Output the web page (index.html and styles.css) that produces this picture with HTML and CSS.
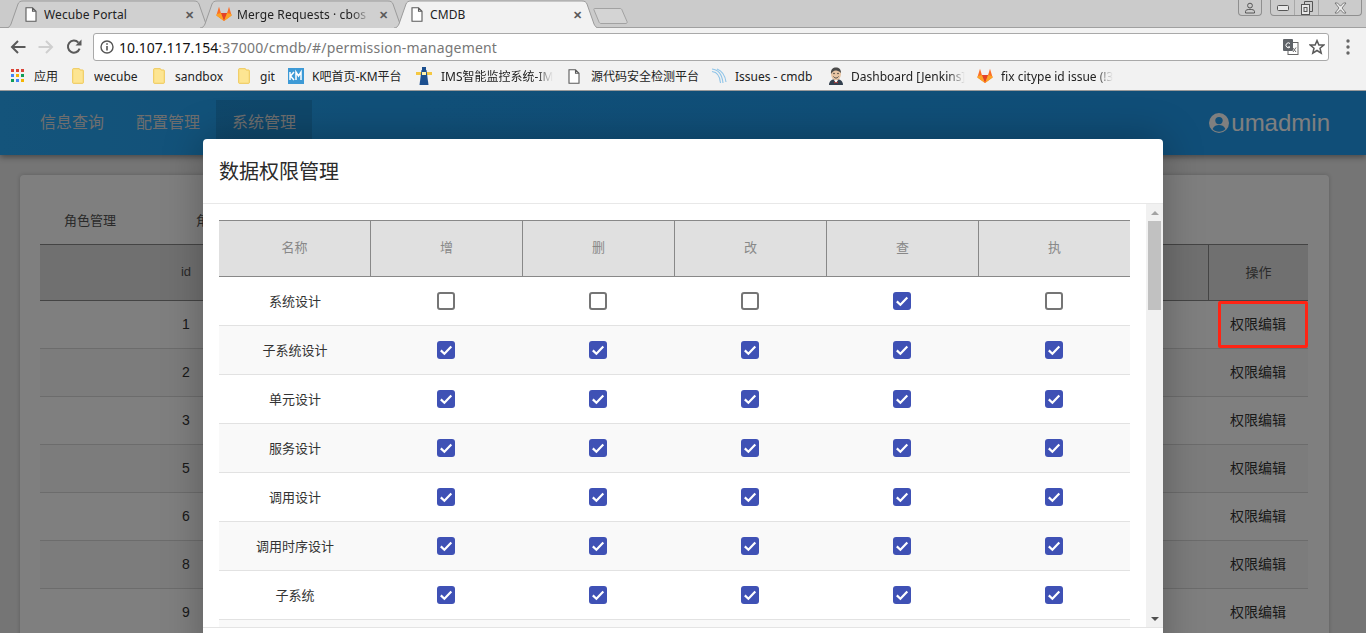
FILE: index.html
```html
<!DOCTYPE html>
<html lang="zh-CN">
<head>
<meta charset="utf-8">
<title>CMDB</title>
<link rel="stylesheet" href="styles.css">
</head>
<body>
<svg class="defs" width="0" height="0" aria-hidden="true">
  <symbol id="check" viewBox="0 0 18 18"><path d="M3.8 9.4 7.4 12.8 14.3 5.6" fill="none" stroke="#fff" stroke-width="2.2"/></symbol>
  <symbol id="doc" viewBox="0 0 12 15"><path d="M1 .8H7.5L11 4.3V14.2H1Z M7.5 .8V4.3H11" fill="#fff" stroke="#5a5a5a" stroke-width="1.1"/></symbol>
  <symbol id="fox" viewBox="0 0 16 16"><path d="M8 15 .4 9.6 .8 8 3 .8 4.9 7H11.1L13 .8 15.2 8 15.6 9.6Z" fill="#fc6d26"/><path d="M8 15 4.9 7H11.1Z" fill="#e24329"/><path d="M8 15 .4 9.6 .8 8 4.9 7ZM8 15 15.6 9.6 15.2 8 11.1 7Z" fill="#fca326"/></symbol>
  <symbol id="folder" viewBox="0 0 12 16"><path d="M.7 1.2C.7.9.9.7 1.2.7H7.4L8.2 2H10.8C11.1 2 11.3 2.2 11.3 2.5V14.8C11.3 15.1 11.1 15.3 10.8 15.3H1.2C.9 15.3.7 15.1.7 14.8Z" fill="#fde592" stroke="#efc752"/></symbol>
  <symbol id="tab-shape" viewBox="0 0 205 28" preserveAspectRatio="none"><path d="M0 28C3 28 4 26 5 24L12 4C13 2 14 1 17 1H188C191 1 192 2 193 4L200 24C201 26 202 28 205 28"/></symbol>
</svg>

<div class="browser">
  <div class="tabstrip">
    <div class="tab">
      <svg class="tab-bg"><use href="#tab-shape"/></svg>
      <svg class="tab-icon doc-icon"><use href="#doc"/></svg>
      <span class="tab-title">Wecube Portal</span>
      <span class="tab-close">✕</span>
    </div>
    <div class="tab tab-second">
      <svg class="tab-bg"><use href="#tab-shape"/></svg>
      <svg class="tab-icon fox-icon"><use href="#fox"/></svg>
      <span class="tab-title fade">Merge Requests · cbos</span>
      <span class="tab-close">✕</span>
    </div>
    <div class="tab tab-active">
      <svg class="tab-bg"><use href="#tab-shape"/></svg>
      <svg class="tab-icon doc-icon"><use href="#doc"/></svg>
      <span class="tab-title">CMDB</span>
      <span class="tab-close">✕</span>
    </div>
    <svg class="newtab" width="36" height="18" viewBox="0 0 36 18"><path d="M1.5 1.5H27C28 1.5 28.6 2 29 3L34 14.5C34.3 15.6 34 16.5 33 16.5H8C7 16.5 6.4 16 6 15L1 3C.7 2 .9 1.5 1.5 1.5Z" fill="#d4d4d4" stroke="#a2a2a2"/></svg>
    <div class="win-controls">
      <div class="win-btn win-profile">
        <svg width="12" height="12" viewBox="0 0 12 12"><circle cx="6" cy="3.6" r="2.4" fill="none" stroke="#555"/><path d="M1.5 11V9.4C1.5 8 3.5 7.4 6 7.4S10.5 8 10.5 9.4V11Z" fill="none" stroke="#555"/></svg>
      </div>
      <div class="win-btn win-group">
        <span class="win-cell"><svg width="12" height="6" viewBox="0 0 12 6"><rect x=".5" y=".5" width="11" height="5" rx="1" fill="#e8e8e8" stroke="#555"/></svg></span>
        <span class="win-cell win-div"><svg width="12" height="14" viewBox="0 0 12 14"><path d="M3.5 3V.5H11.5V10.5H9" fill="none" stroke="#555"/><rect x=".5" y="3.5" width="8" height="10" fill="#e8e8e8" stroke="#555"/><rect x="3" y="6.5" width="3" height="4" fill="none" stroke="#555"/></svg></span>
        <span class="win-cell win-close"><svg width="13" height="12" viewBox="0 0 13 12"><path d="M1 1H3.5L6.5 4.2 9.5 1H12L8 6 12 11H9.5L6.5 7.8 3.5 11H1L5 6Z" fill="#eee" stroke="#666" stroke-width=".8"/></svg></span>
      </div>
    </div>
  </div>

  <div class="toolbar">
    <svg class="nav-btn" width="16" height="14" viewBox="0 0 16 14"><path d="M15.5 7H2.5M8 1 2 7 8 13" fill="none" stroke="#5a5a5a" stroke-width="2"/></svg>
    <svg class="nav-btn" width="16" height="14" viewBox="0 0 16 14"><path d="M.5 7H13.5M8 1 14 7 8 13" fill="none" stroke="#cfcfcf" stroke-width="2"/></svg>
    <svg class="nav-btn" width="16" height="16" viewBox="0 0 16 16"><path d="M13.6 9.6A6 6 0 1 1 12.4 3.6" fill="none" stroke="#5a5a5a" stroke-width="2"/><path d="M9.5 6.4H15.5V.4Z" fill="#5a5a5a"/></svg>
    <div class="omnibox">
      <svg width="14" height="14" viewBox="0 0 14 14"><circle cx="7" cy="7" r="6" fill="none" stroke="#555" stroke-width="1.4"/><path d="M7 6V10.6M7 3.2V4.8" stroke="#555" stroke-width="1.6"/></svg>
      <span class="url"><b class="url-host">10.107.117.154</b>:37000/cmdb/#/permission-management</span>
      <svg class="translate" width="16" height="16" viewBox="0 0 16 16"><rect x="5" y="3.5" width="10" height="12" fill="#fff" stroke="#666"/><rect x="0" y="0" width="10" height="12" rx="1" fill="#5f6368"/><path d="M7 4.5A2.4 2.4 0 1 0 7 8H5" fill="none" stroke="#fff"/><path d="M9.5 8.5 13 13M13 8.5 10 13" stroke="#666"/></svg>
      <svg class="star" width="16" height="16" viewBox="0 0 16 16"><path d="M8 1.6 9.9 6H14.8L11 9.2 12.2 14.2 8 11.5 3.8 14.2 5 9.2 1.2 6H6.1Z" fill="none" stroke="#5a5a5a" stroke-width="1.5"/></svg>
    </div>
    <svg class="menu" width="4" height="16" viewBox="0 0 4 16"><circle cx="2" cy="2" r="1.7" fill="#666"/><circle cx="2" cy="8" r="1.7" fill="#666"/><circle cx="2" cy="14" r="1.7" fill="#666"/></svg>
  </div>

  <div class="bookmarks">
    <div class="bm"><svg width="14" height="14" viewBox="0 0 14 14"><g fill="#db4437"><rect width="3" height="3"/><rect x="5" width="3" height="3"/><rect x="10" width="3" height="3"/></g><g fill="#4285f4"><rect y="5" width="3" height="3"/><rect x="5" y="5" width="3" height="3" fill="#f4b400"/><rect x="10" y="5" width="3" height="3" fill="#0f9d58"/></g><rect y="10" width="3" height="3" fill="#0f9d58"/><rect x="5" y="10" width="3" height="3" fill="#4285f4"/><rect x="10" y="10" width="3" height="3" fill="#f4b400"/></svg><span class="bm-text">应用</span></div>
    <div class="bm"><svg width="12" height="16"><use href="#folder"/></svg><span class="bm-text bm-latin">wecube</span></div>
    <div class="bm"><svg width="12" height="16"><use href="#folder"/></svg><span class="bm-text bm-latin">sandbox</span></div>
    <div class="bm"><svg width="12" height="16"><use href="#folder"/></svg><span class="bm-text bm-latin">git</span></div>
    <div class="bm bm-tight"><svg width="16" height="16" viewBox="0 0 16 16"><rect width="16" height="16" fill="#3d9ad6"/><path d="M2 4V12M6 4 2.500 8 6 12M8 12V4L10.500 8 13 4V12" fill="none" stroke="#fff" stroke-width="1.500"/></svg><span class="bm-text">K吧首页-KM平台</span></div>
    <div class="bm"><svg width="16" height="18" viewBox="0 0 16 18"><rect x="0" y="5" width="16" height="3" fill="#f5c842"/><rect x="6" y="0" width="4" height="3" fill="#1c4f8f"/><path d="M5.500 3H10.500L12.500 18H3.500Z" fill="#1c4f8f"/><rect x="6" y="5" width="4" height="3" fill="#fff3b0"/></svg><span class="bm-text bm-fade">IMS智能监控系统-IM</span></div>
    <div class="bm bm-wide"><svg width="12" height="15"><use href="#doc"/></svg><span class="bm-text">源代码安全检测平台</span></div>
    <div class="bm bm-tight"><svg width="16" height="16" viewBox="0 0 16 16"><path d="M1 1C7 1.500 11 6 12 15M1 3.500C5.500 4 9 8 9.500 15M6 1C10 2.500 14 7 15 14" fill="none" stroke="#8fc4e8" stroke-width="1.100"/></svg><span class="bm-text">Issues - cmdb</span></div>
    <div class="bm bm-snug"><svg width="16" height="18" viewBox="0 0 16 18"><path d="M1 18C1 14 4 12 8 12S15 14 15 18Z" fill="#33404f"/><path d="M6 13H10L8 16Z" fill="#fff"/><path d="M6.200 14.500 8 15.500 9.800 14.500V16.500L8 15.500 6.200 16.500Z" fill="#c0322b"/><ellipse cx="8" cy="7" rx="5" ry="6.200" fill="#e8c5a4"/><path d="M3 7C2.500 2 5 .5 8 .5S13 2 13 6C11 4 9 3.500 7 3.500 5.500 4 4 5 3 7Z" fill="#4b4b4b"/><path d="M5.500 9.500C7 11.500 9 11.500 10.500 9.500" fill="none" stroke="#444"/><circle cx="6" cy="6.500" r=".7" fill="#222"/><circle cx="10" cy="6.500" r=".7" fill="#222"/></svg><span class="bm-text bm-fade">Dashboard [Jenkins]</span></div>
    <div class="bm bm-tight"><svg width="16" height="16"><use href="#fox"/></svg><span class="bm-text bm-fade">fix citype id issue (!3</span></div>
  </div>
</div>

<div class="page">
  <header class="app-header">
    <nav class="app-nav">
      <span class="app-nav-item">信息查询</span>
      <span class="app-nav-item">配置管理</span>
      <span class="app-nav-item app-nav-active">系统管理</span>
    </nav>
    <div class="user">
      <svg width="20" height="20" viewBox="0 0 20 20"><circle cx="10" cy="10" r="10" fill="#fff"/><circle cx="10" cy="7.600" r="3.700" fill="#24a0f4"/><path d="M3.600 16C5 12.800 7.500 12 10 12S15 12.800 16.400 16C14.800 17.800 12.500 18.800 10 18.800S5.200 17.800 3.600 16Z" fill="#24a0f4"/></svg>
      <span>umadmin</span>
    </div>
  </header>

  <main class="content">
    <section class="card">
      <div class="role-tabs">
        <span class="role-tab">角色管理</span>
        <span class="role-tab">角色用户</span>
      </div>
      <table class="role-table">
        <thead>
          <tr><th class="col-id">id</th><th class="col-name">角色</th><th class="col-op">操作</th></tr>
        </thead>
        <tbody>
          <tr><td>1</td><td></td><td>权限编辑</td></tr>
          <tr><td>2</td><td></td><td>权限编辑</td></tr>
          <tr><td>3</td><td></td><td>权限编辑</td></tr>
          <tr><td>5</td><td></td><td>权限编辑</td></tr>
          <tr><td>6</td><td></td><td>权限编辑</td></tr>
          <tr><td>8</td><td></td><td>权限编辑</td></tr>
          <tr><td>9</td><td></td><td>权限编辑</td></tr>
        </tbody>
      </table>
    </section>
  </main>

  <div class="overlay"></div>
  <div class="annotation"></div>

  <div class="modal">
    <div class="modal-head">数据权限管理</div>
    <div class="modal-body">
      <div class="modal-scroll">
        <table class="perm-table">
          <thead>
            <tr><th>名称</th><th>增</th><th>删</th><th>改</th><th>查</th><th>执</th></tr>
          </thead>
          <tbody>
            <tr><td>系统设计</td><td><span class="cb"></span></td><td><span class="cb"></span></td><td><span class="cb"></span></td><td><span class="cb cb-on"><svg><use href="#check"/></svg></span></td><td><span class="cb"></span></td></tr>
            <tr><td>子系统设计</td><td><span class="cb cb-on"><svg><use href="#check"/></svg></span></td><td><span class="cb cb-on"><svg><use href="#check"/></svg></span></td><td><span class="cb cb-on"><svg><use href="#check"/></svg></span></td><td><span class="cb cb-on"><svg><use href="#check"/></svg></span></td><td><span class="cb cb-on"><svg><use href="#check"/></svg></span></td></tr>
            <tr><td>单元设计</td><td><span class="cb cb-on"><svg><use href="#check"/></svg></span></td><td><span class="cb cb-on"><svg><use href="#check"/></svg></span></td><td><span class="cb cb-on"><svg><use href="#check"/></svg></span></td><td><span class="cb cb-on"><svg><use href="#check"/></svg></span></td><td><span class="cb cb-on"><svg><use href="#check"/></svg></span></td></tr>
            <tr><td>服务设计</td><td><span class="cb cb-on"><svg><use href="#check"/></svg></span></td><td><span class="cb cb-on"><svg><use href="#check"/></svg></span></td><td><span class="cb cb-on"><svg><use href="#check"/></svg></span></td><td><span class="cb cb-on"><svg><use href="#check"/></svg></span></td><td><span class="cb cb-on"><svg><use href="#check"/></svg></span></td></tr>
            <tr><td>调用设计</td><td><span class="cb cb-on"><svg><use href="#check"/></svg></span></td><td><span class="cb cb-on"><svg><use href="#check"/></svg></span></td><td><span class="cb cb-on"><svg><use href="#check"/></svg></span></td><td><span class="cb cb-on"><svg><use href="#check"/></svg></span></td><td><span class="cb cb-on"><svg><use href="#check"/></svg></span></td></tr>
            <tr><td>调用时序设计</td><td><span class="cb cb-on"><svg><use href="#check"/></svg></span></td><td><span class="cb cb-on"><svg><use href="#check"/></svg></span></td><td><span class="cb cb-on"><svg><use href="#check"/></svg></span></td><td><span class="cb cb-on"><svg><use href="#check"/></svg></span></td><td><span class="cb cb-on"><svg><use href="#check"/></svg></span></td></tr>
            <tr><td>子系统</td><td><span class="cb cb-on"><svg><use href="#check"/></svg></span></td><td><span class="cb cb-on"><svg><use href="#check"/></svg></span></td><td><span class="cb cb-on"><svg><use href="#check"/></svg></span></td><td><span class="cb cb-on"><svg><use href="#check"/></svg></span></td><td><span class="cb cb-on"><svg><use href="#check"/></svg></span></td></tr>
            <tr><td></td><td></td><td></td><td></td><td></td><td></td></tr>
          </tbody>
        </table>
      </div>
      <div class="scrollbar">
        <span class="sb-arrow sb-up"></span>
        <span class="sb-thumb"></span>
        <span class="sb-arrow sb-down"></span>
      </div>
    </div>
  </div>
</div>
</body>
</html>
```

FILE: styles.css
```css
* { box-sizing: border-box; }
html, body { height: 100%; }
body {
  margin: 0;
  height: 633px;
  overflow: hidden;
  display: flex;
  flex-direction: column;
  font-family: "Noto Sans", "Noto Sans CJK SC", sans-serif;
  background: #eaeaea;
}
.defs { position: absolute; }

/* browser chrome */
.browser { flex: none; height: 91px; background: #f2f2f2; border-bottom: 1px solid #9a9a9a; }
.tabstrip {
  position: relative;
  height: 28px;
  padding-left: 6px;
  display: flex;
  background: #cbcbcb;
  border-bottom: 1px solid #a0a0a0;
}
.tab {
  position: relative;
  flex: none;
  width: 205px;
  height: 28px;
  margin-right: -11px;
  padding: 0 17px 0 19px;
  display: flex;
  align-items: center;
  font-size: 12px;
  color: #222;
}
.tab-bg { position: absolute; inset: 0; width: 100%; height: 100%; fill: #d0d0d0; stroke: #9b9b9b; }
.tab-active { z-index: 1; padding-left: 17px; }
.tab-active .tab-bg { fill: #f2f2f2; }
.tab-second { padding-left: 16px; }
.tab-icon { position: relative; flex: none; }
.doc-icon { width: 12px; height: 15px; margin-right: 7px; }
.fox-icon { width: 16px; height: 16px; margin-right: 5px; }
.tab-title { position: relative; flex: 1; white-space: nowrap; overflow: hidden; font-size: 12px; letter-spacing: .1px; }
.fade { -webkit-mask-image: linear-gradient(to right, #000 85%, transparent); mask-image: linear-gradient(to right, #000 85%, transparent); }
.tab-close { position: relative; flex: none; margin-left: 8px; font-size: 11px; font-weight: 700; color: #5a5a5a; }
.newtab { flex: none; margin: 7px 0 0 5px; }
.win-controls { position: absolute; right: 4px; top: 0; display: flex; gap: 8px; }
.win-btn {
  height: 16px;
  border: 1px solid #8f8f8f;
  border-top: 0;
  border-radius: 0 0 4px 4px;
  display: flex;
  align-items: center;
  justify-content: center;
}
.win-profile { width: 24px; }
.win-group { width: 92px; }
.win-cell { flex: 1; height: 100%; display: flex; align-items: center; justify-content: center; }
.win-div { flex: none; width: 25px; border-left: 1px solid #a8a8a8; border-right: 1px solid #a8a8a8; }
.win-close { flex: none; width: 42px; }

.toolbar { height: 34px; padding: 4px 0 0 10px; display: flex; align-items: center; }
.nav-btn { flex: none; margin-right: 12px; }
.omnibox {
  width: 1236px;
  height: 28px;
  margin-left: -1px;
  padding: 0 3px 0 6px;
  display: flex;
  align-items: center;
  background: #fff;
  border: 1px solid #a9a9a9;
  border-radius: 3px;
}
.url { flex: 1; margin-left: 5px; font-size: 14px; letter-spacing: .2px; color: #777; white-space: nowrap; }
.url-host { font-weight: 400; color: #111; letter-spacing: 0; }
.translate { margin-right: 10px; }
.menu { margin-left: 17px; }

.bookmarks {
  height: 28px;
  padding-left: 11px;
  display: grid;
  grid-template-columns: 61px 81px 85px 50px 128px 152px 143px 117px 149px 150px;
  align-items: center;
}
.bm { display: flex; align-items: center; gap: 9px; overflow: hidden; white-space: nowrap; font-size: 12px; color: #222; }
.bm svg { flex: none; }
.bm-text { overflow: hidden; }
.bm-latin { margin-left: 1px; }
.bm-tight { gap: 8px; }
.bm-snug { gap: 7px; }
.bm-wide { gap: 11px; }
.bm-fade { -webkit-mask-image: linear-gradient(to right, #000 85%, transparent); mask-image: linear-gradient(to right, #000 85%, transparent); }

/* application */
.page {
  position: relative;
  flex: 1;
  overflow: hidden;
  background: #eaeaea;
  font-family: "Liberation Sans", "Noto Sans CJK SC", sans-serif;
}
.overlay { position: absolute; inset: 0; background: rgba(0, 0, 0, .5); }
.app-header {
  height: 64px;
  padding: 0 36px 0 24px;
  display: flex;
  justify-content: space-between;
  background: linear-gradient(to right, #28a8f6, #22a0f2 30%, #209cf0);
  box-shadow: 0 2px 6px rgba(0, 0, 0, .4);
  color: #fff;
}
.app-nav { display: flex; padding-top: 9px; }
.app-nav-item { width: 96px; height: 55px; display: flex; align-items: center; justify-content: center; padding-bottom: 14px; font-size: 16px; color: #ddd; }
.app-nav-active { background: rgba(0, 0, 0, .12); }
.user { display: flex; align-items: center; gap: 2px; font-size: 24px; padding-bottom: 1px; }

.content { padding: 20px 37px 0 20px; }
.card { padding: 21px 21px 0 20px; height: 500px; background: #fff; border-radius: 4px; box-shadow: 0 0 4px rgba(0, 0, 0, .2); }
.role-tabs { height: 48px; display: flex; gap: 80px; padding: 3px 0 0 24px; font-size: 13px; color: #555; }
.role-tab { width: 52px; white-space: nowrap; height: 40px; display: flex; align-items: center; }
.role-table { width: 1268px; border-spacing: 0; table-layout: fixed; font-size: 14px; color: #333; }
.role-table th {
  height: 57px;
  padding: 0 0 3px;
  background: #e0e0e0;
  border-top: 1px solid #888;
  border-bottom: 1px solid #888;
  font-size: 13px;
  font-weight: 400;
  color: #555;
}
.col-id { width: 292px; }
.col-op { width: 100px; border-left: 1px solid #888; }
.role-table td { height: 48px; padding: 0 0 4px; text-align: center; border-bottom: 1px solid #d8d8d8; }
.role-table td:first-child { padding-bottom: 2px; }
.role-table tbody tr:nth-child(even) td { background: #f9f9f9; }

.annotation { position: absolute; left: 1218px; top: 210px; width: 90px; height: 47px; border: 3px solid #ff2414; border-radius: 2px; }

/* dialog */
.modal {
  position: absolute;
  left: 203px;
  top: 48px;
  width: 960px;
  height: 530px;
  background: #fff;
  border-radius: 4px 4px 0 0;
  box-shadow: 0 0 40px rgba(0, 0, 0, .28);
}
.modal-head {
  height: 65px;
  padding: 0 16px 2px;
  display: flex;
  align-items: center;
  font-size: 20px;
  color: #2b2b2b;
  border-bottom: 1px solid #e8e8e8;
}
.modal-body { height: 424px; display: flex; border-bottom: 1px solid #e4e4e4; }
.modal-scroll { flex: 1; height: 423px; padding: 16px 15px 0 16px; overflow: hidden; }
.perm-table { width: 911px; border-spacing: 0; table-layout: fixed; font-size: 13px; color: #333; text-align: center; }
.perm-table th {
  width: 152px;
  height: 57px;
  padding: 0 0 4px;
  background: #e0e0e0;
  border-top: 1px solid #888;
  border-bottom: 1px solid #888;
  border-right: 1px solid #888;
  font-size: 13px;
  font-weight: 400;
  color: #888;
}
.perm-table th:last-child { width: 151px; border-right: 0; }
.perm-table td { height: 49px; padding: 0; border-bottom: 1px solid #e2e2e2; }
.perm-table td:first-child { padding-bottom: 2px; }
.perm-table tbody tr:nth-child(even) td { background: #f9f9f9; }
.cb {
  width: 18px;
  height: 18px;
  display: block;
  margin: 0 auto;
  position: relative;
  left: -1px;
  border: 2px solid #757575;
  border-radius: 3px;
  background: #fff;
}
.cb-on { border: 0; background: #3f51b5; }
.cb-on svg { display: block; width: 18px; height: 18px; }

.scrollbar { flex: none; width: 17px; height: 423px; display: flex; flex-direction: column; align-items: center; background: #f1f1f1; }
.sb-thumb { width: 13px; height: 89px; background: #c1c1c1; }
.sb-arrow { flex: none; width: 0; height: 0; border-left: 4px solid transparent; border-right: 4px solid transparent; }
.sb-up { margin: 7px 0 6px; border-bottom: 4px solid #a3a3a3; }
.sb-down { margin-top: auto; margin-bottom: 6px; border-top: 4px solid #505050; }
```
